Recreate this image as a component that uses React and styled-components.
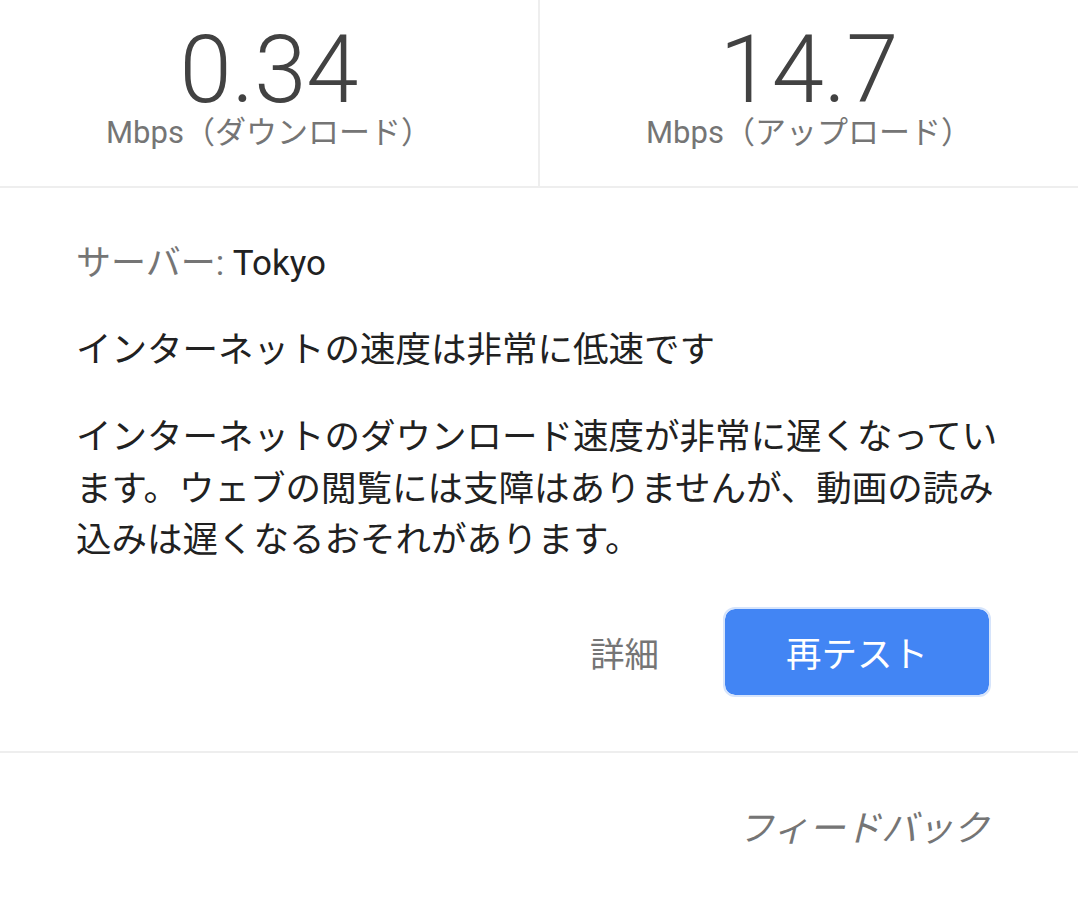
import styled, { createGlobalStyle } from "styled-components";

const GlobalStyle = createGlobalStyle`
  body {
    margin: 0;
    background: #ffffff;
    font-family: Roboto, "Noto Sans CJK JP", sans-serif;
  }
`;

const Page = styled.div`
  width: 1078px;
  height: 900px;
  background: #ffffff;
  display: flex;
  flex-direction: column;
`;

const Stats = styled.div`
  display: grid;
  grid-template-columns: 540px 1fr;
  border-bottom: 2px solid #eeeeee;
`;

const StatCell = styled.div`
  display: flex;
  flex-direction: column;
  align-items: center;
  padding-top: 23px;
  padding-bottom: 37px;
  border-right: ${(p) => (p.$divider ? "2px solid #eeeeee" : "none")};
`;

const BigNumber = styled.div`
  font-family: Roboto, sans-serif;
  font-weight: 300;
  font-size: 94px;
  line-height: 94px;
  color: #424242;
`;

const Unit = styled.div`
  font-size: 31px;
  line-height: 32px;
  color: #757575;
`;

const Body = styled.div`
  padding: 50px 88px 52px 76px;
  display: flex;
  flex-direction: column;
  border-bottom: 2px solid #eeeeee;
`;

const Server = styled.div`
  font-size: 35px;
  line-height: 52px;
  color: #212121;
`;

const ServerLabel = styled.span`
  color: #757575;
`;

const Heading = styled.div`
  margin-top: 34px;
  font-size: 35.5px;
  line-height: 52px;
  color: #212121;
`;

const Paragraph = styled.p`
  margin: 36px -12px 0 0;
  font-size: 35.5px;
  line-height: 51.5px;
  color: #212121;
`;

const Actions = styled.div`
  margin-top: 40px;
  margin-bottom: 2px;
  display: flex;
  justify-content: flex-end;
  align-items: center;
  gap: 64px;
`;

const TextButton = styled.button`
  border: none;
  background: none;
  padding: 0;
  font-family: inherit;
  font-size: 34.5px;
  color: #757575;
`;

const PrimaryButton = styled.button`
  width: 268px;
  height: 90px;
  margin-right: -1px;
  border: 2px solid #d6e4fb;
  border-radius: 12px;
  background: #4285f4;
  background-clip: padding-box;
  color: #ffffff;
  font-family: inherit;
  font-size: 35.5px;
`;

const Footer = styled.div`
  display: flex;
  justify-content: flex-end;
  padding: 50px 89px 0 0;
`;

const Feedback = styled.div`
  font-size: 36px;
  line-height: 52px;
  font-style: italic;
  color: #757575;
`;

const App = () => {
  return (
    <Page>
      <GlobalStyle />
      <Stats>
        <StatCell $divider>
          <BigNumber>0.34</BigNumber>
          <Unit>Mbps（ダウンロード）</Unit>
        </StatCell>
        <StatCell>
          <BigNumber>14.7</BigNumber>
          <Unit>Mbps（アップロード）</Unit>
        </StatCell>
      </Stats>
      <Body>
        <Server>
          <ServerLabel>サーバー: </ServerLabel>Tokyo
        </Server>
        <Heading>インターネットの速度は非常に低速です</Heading>
        <Paragraph>
          インターネットのダウンロード速度が非常に遅くなっています。ウェブの閲覧には支障はありませんが、動画の読み込みは遅くなるおそれがあります。
        </Paragraph>
        <Actions>
          <TextButton>詳細</TextButton>
          <PrimaryButton>再テスト</PrimaryButton>
        </Actions>
      </Body>
      <Footer>
        <Feedback>フィードバック</Feedback>
      </Footer>
    </Page>
  );
};

export default App;
